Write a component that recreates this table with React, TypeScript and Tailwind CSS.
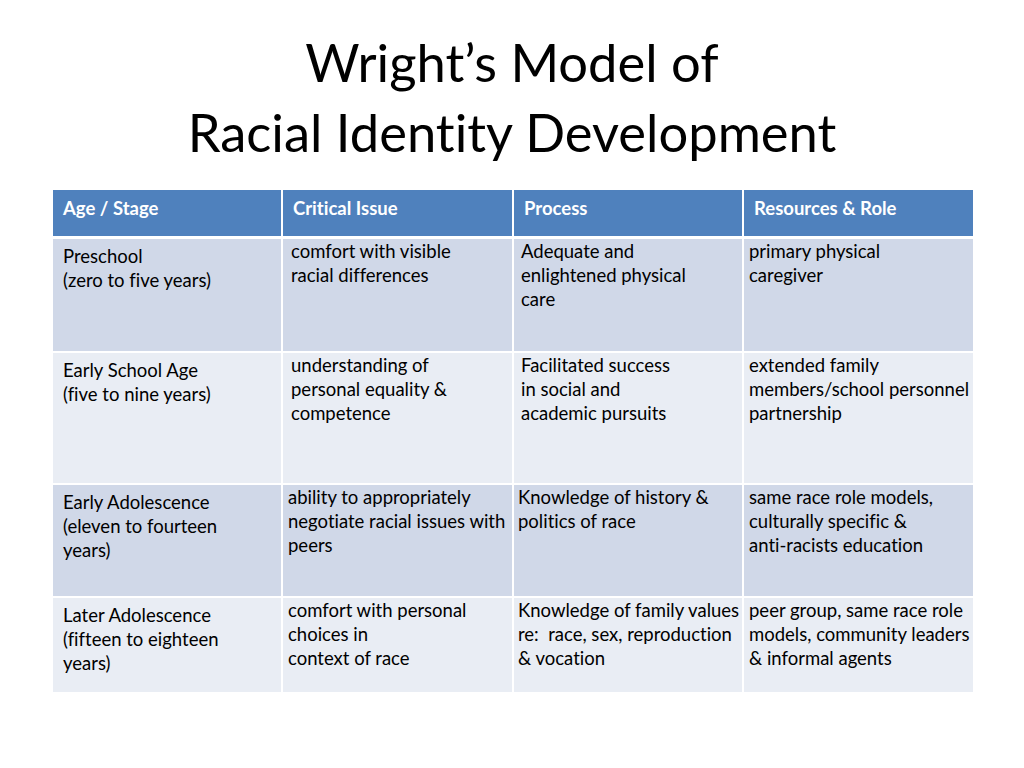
const rows = [
  {
    h: "h-[112px]",
    stage: ["Preschool", "(zero to five years)"],
    issue: ["comfort with visible", "racial differences"],
    process: ["Adequate and", "enlightened physical", "care"],
    role: ["primary physical", "caregiver"],
    shifted: false,
  },
  {
    h: "h-[130px]",
    stage: ["Early School Age", "(five to nine years)"],
    issue: ["understanding of", "personal equality &", "competence"],
    process: ["Facilitated success", "in social and", "academic pursuits"],
    role: ["extended family", "members/school personnel", "partnership"],
    shifted: false,
  },
  {
    h: "h-[111px]",
    stage: ["Early Adolescence", "(eleven to fourteen", "years)"],
    issue: ["ability to appropriately", "negotiate racial issues with", "peers"],
    process: ["Knowledge of history &", "politics of race"],
    role: ["same race role models,", "culturally specific &", "anti-racists education"],
    shifted: true,
  },
  {
    h: "h-[94px]",
    stage: ["Later Adolescence", "(fifteen to eighteen", "years)"],
    issue: ["comfort with personal", "choices in", "context of race"],
    process: ["Knowledge of family values", "re:  race, sex, reproduction", "& vocation"],
    role: ["peer group, same race role", "models, community leaders", "& informal agents"],
    shifted: true,
  },
];

const Lines = ({ lines }: { lines: string[] }) => (
  <>
    {lines.map((l, i) => (
      <div key={i} className="whitespace-pre">
        {l}
      </div>
    ))}
  </>
);

export default function App() {
  return (
    <div
      className="w-[1024px] h-[768px] bg-white text-black overflow-hidden [font-variant-ligatures:none]"
      style={{ fontFamily: "Lato, 'Open Sans', sans-serif" }}
    >
      {/* Title */}
      <div className="pt-[27px] text-center text-[52.5px] leading-[70px] text-black">
        <div>Wright’s Model of</div>
        <div>Racial Identity Development</div>
      </div>

      {/* Table */}
      <div className="ml-[53px] mt-[23px] w-[920px] flex flex-col gap-[2px]">
        <div className="grid grid-cols-[228px_229px_228px_229px] gap-x-[2px] h-[46px] mb-[1px] text-[18.5px] leading-[24px] font-bold text-white">
          <div className="bg-[#4f81bd] pl-[10px] pt-[6px]">Age / Stage</div>
          <div className="bg-[#4f81bd] pl-[10px] pt-[6px]">Critical Issue</div>
          <div className="bg-[#4f81bd] pl-[10px] pt-[6px]">Process</div>
          <div className="bg-[#4f81bd] pl-[10px] pt-[6px]">Resources &amp; Role</div>
        </div>
        {rows.map((r, i) => {
          const bg = i % 2 === 0 ? "bg-[#d0d8e8]" : "bg-[#e9edf4]";
          return (
            <div
              key={i}
              className={`grid grid-cols-[228px_229px_228px_229px] gap-x-[2px] ${r.h} text-[18.5px] leading-[24px]`}
            >
              <div className={`${bg} pl-[10px] pt-[5px]`}>
                <Lines lines={r.stage} />
              </div>
              <div className={`${bg} ${r.shifted ? "pl-[5px]" : "pl-[8px]"}`}>
                <Lines lines={r.issue} />
              </div>
              <div className={`${bg} ${r.shifted ? "pl-[4px]" : "pl-[7px]"}`}>
                <Lines lines={r.process} />
              </div>
              <div className={`${bg} pl-[5px]`}>
                <Lines lines={r.role} />
              </div>
            </div>
          );
        })}
      </div>
    </div>
  );
}
